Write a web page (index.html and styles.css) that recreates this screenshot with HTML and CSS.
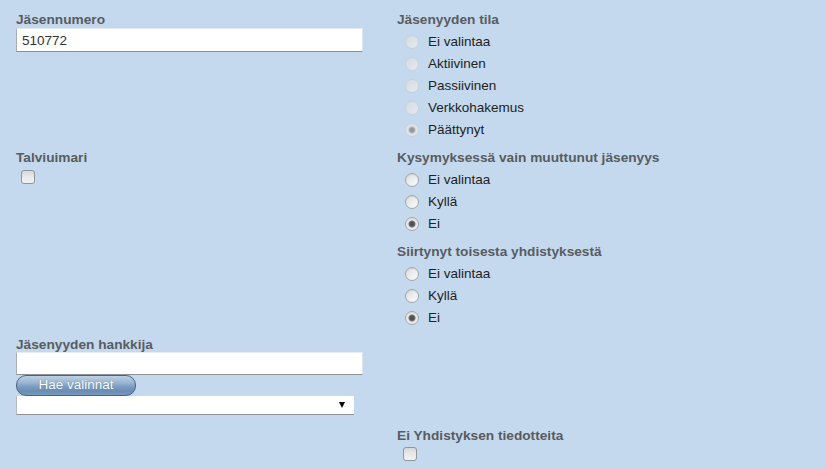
FILE: index.html
```html
<!DOCTYPE html>
<html lang="fi">
<head>
<meta charset="utf-8">
<title>Jäsentiedot</title>
<link rel="stylesheet" href="styles.css">
</head>
<body>
<form class="form">
  <div class="cell">
    <div class="label">Jäsennumero</div>
    <input class="text" type="text" value="510772">
  </div>
  <div class="cell">
    <div class="label">Jäsenyyden tila</div>
    <div class="radios">
      <label class="opt"><input class="radio" type="radio" name="tila" disabled>Ei valintaa</label>
      <label class="opt"><input class="radio" type="radio" name="tila" disabled>Aktiivinen</label>
      <label class="opt"><input class="radio" type="radio" name="tila" disabled>Passiivinen</label>
      <label class="opt"><input class="radio" type="radio" name="tila" disabled>Verkkohakemus</label>
      <label class="opt"><input class="radio" type="radio" name="tila" disabled checked>Päättynyt</label>
    </div>
  </div>

  <div class="cell">
    <div class="label">Talviuimari</div>
    <input class="check" type="checkbox">
  </div>
  <div class="cell">
    <div class="group">
      <div class="label">Kysymyksessä vain muuttunut jäsenyys</div>
      <div class="radios">
        <label class="opt"><input class="radio" type="radio" name="muut">Ei valintaa</label>
        <label class="opt"><input class="radio" type="radio" name="muut">Kyllä</label>
        <label class="opt"><input class="radio" type="radio" name="muut" checked>Ei</label>
      </div>
    </div>
    <div class="group group-last">
      <div class="label">Siirtynyt toisesta yhdistyksestä</div>
      <div class="radios">
        <label class="opt"><input class="radio" type="radio" name="siirt">Ei valintaa</label>
        <label class="opt"><input class="radio" type="radio" name="siirt">Kyllä</label>
        <label class="opt"><input class="radio" type="radio" name="siirt" checked>Ei</label>
      </div>
    </div>
  </div>

  <div class="cell cell-last">
    <div class="label">Jäsenyyden hankkija</div>
    <input class="text text-b" type="text" value="">
    <button class="btn" type="button">Hae valinnat</button>
    <div class="select"><span class="arrow"></span></div>
  </div>
  <div class="cell"></div>

  <div class="cell"></div>
  <div class="cell">
    <div class="label">Ei Yhdistyksen tiedotteita</div>
    <input class="check check-r" type="checkbox">
  </div>
</form>
</body>
</html>
```

FILE: styles.css
```css
html, body {
  margin: 0;
  padding: 0;
  background: #c5d9ee;
  height: 100%;
}
body {
  font-family: "Liberation Sans", Arial, sans-serif;
  font-size: 13.5px;
  color: #222;
  overflow: hidden;
}
.form {
  display: grid;
  grid-template-columns: 381px 1fr;
  align-items: start;
  padding: 12px 0 0 16px;
}
.cell {
  display: flex;
  flex-direction: column;
  align-items: flex-start;
}
.cell-last {
  padding-bottom: 13px;
}
.label {
  font-weight: bold;
  font-size: 13.7px;
  color: #585c60;
  line-height: 15px;
  white-space: nowrap;
}
.text {
  box-sizing: border-box;
  width: 347px;
  height: 24px;
  margin: 1px 0 0 0;
  padding: 0 5px;
  border: 1px solid;
  border-color: #e4ebf2 #dfe5ec #8e9194 #a8adb3;
  background: #fff;
  font-family: "Liberation Sans", Arial, sans-serif;
  font-size: 13.5px;
  color: #333;
  outline: none;
}
.text-b {
  margin-top: 0;
  height: 23px;
}
.radios {
  display: flex;
  flex-direction: column;
  margin-top: 4px;
  padding-bottom: 9px;
}
.group-last .radios {
  padding-bottom: 8px;
}
.opt {
  display: flex;
  align-items: center;
  height: 22px;
  line-height: 22px;
  padding-left: 8px;
  white-space: nowrap;
}
.radio {
  appearance: none;
  -webkit-appearance: none;
  box-sizing: border-box;
  width: 14px;
  height: 14px;
  margin: 0 9px 0 0;
  border-radius: 50%;
  border: 1px solid #a3a6aa;
  background: linear-gradient(135deg, #dadcdf 0%, #eeeff0 55%, #fbfbfb 100%);
  box-shadow: inset 0 1px 1px rgba(0,0,0,0.08);
}
.radio:checked {
  background: radial-gradient(circle at 50% 50%, #4a4a4a 0, #555 2px, #777 3px, #e6e7e9 4px, #f3f3f4 100%);
}
.radio:disabled {
  border-color: #c9d0d8;
  background: linear-gradient(135deg, #d4dbe3 0%, #dee4ea 60%, #e6ebf0 100%);
  box-shadow: none;
}
.radio:disabled:checked {
  background: radial-gradient(circle at 50% 50%, #8d9094 0, #999ca0 2px, #b3b8bd 3px, #dbe1e7 4px, #e4e9ee 100%);
}
.check {
  appearance: none;
  -webkit-appearance: none;
  box-sizing: border-box;
  width: 14px;
  height: 14px;
  margin: 5px 0 0 5px;
  border-radius: 3px;
  border: 1px solid #8f959b;
  background: linear-gradient(180deg, #d6d8da 0%, #e8e9ea 50%, #f2f2f2 100%);
}
.check-r {
  margin: 4px 0 0 6px;
}
.btn {
  box-sizing: border-box;
  width: 120px;
  height: 21px;
  margin: 0;
  padding: 0 0 1px 0;
  border: 1px solid #4a6480;
  border-radius: 10px;
  background: linear-gradient(180deg, #bcd0e4 0%, #9ab6d3 35%, #7d9ec2 55%, #6a8db5 80%, #7899bf 100%);
  color: #fff;
  font-family: "Liberation Sans", Arial, sans-serif;
  font-size: 13.5px;
  line-height: 18px;
  text-shadow: 0 0 1px rgba(40,60,90,0.6);
}
.select {
  box-sizing: border-box;
  width: 338px;
  height: 19px;
  margin-top: 0;
  background: #fff;
  border-bottom: 1px solid #8e9194;
  border-left: 1px solid #b5bac0;
  display: flex;
  justify-content: flex-end;
  align-items: center;
  padding-right: 9px;
}
.arrow {
  width: 0;
  height: 0;
  border-left: 3.5px solid transparent;
  border-right: 3.5px solid transparent;
  border-top: 6px solid #000;
}
```
